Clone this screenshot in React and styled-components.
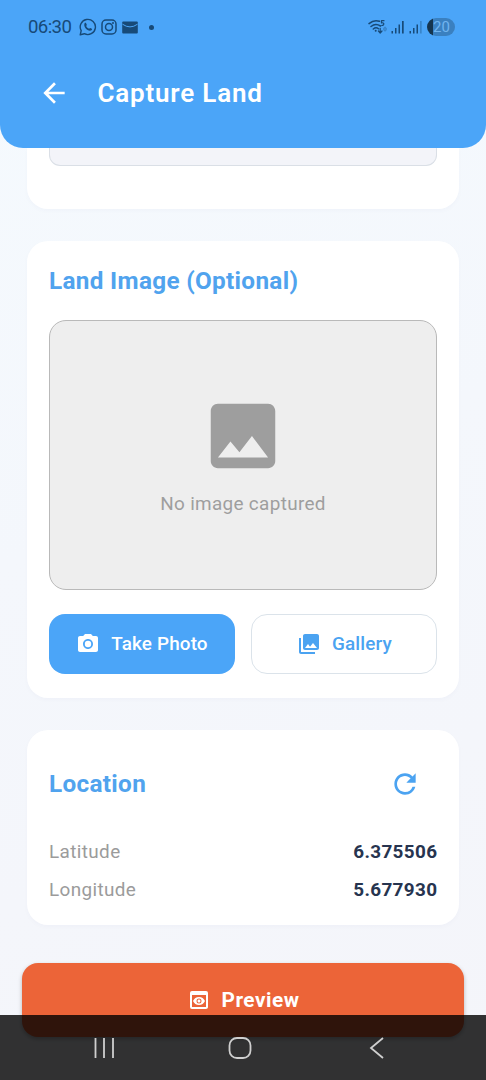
import React from "react";
import styled, { createGlobalStyle } from "styled-components";
import { MdArrowBack, MdImage, MdCameraAlt, MdPhotoLibrary, MdRefresh, MdPreview } from "react-icons/md";

const Global = createGlobalStyle`
  * { box-sizing: border-box; }
  body { margin: 0; font-family: Roboto, "Liberation Sans", sans-serif; }
  button { font-family: inherit; border: 0; padding: 0; background: none; }
`;

const Screen = styled.div`
  position: relative;
  width: 486px;
  height: 1080px;
  overflow: hidden;
  display: flex;
  flex-direction: column;
  background: linear-gradient(160deg, #f5fafe 0%, #f4f7fc 45%, #f4f5fa 100%);
`;

const Header = styled.header`
  height: 148px;
  flex: none;
  background: #4ba5f8;
  border-radius: 0 0 23px 23px;
`;

const StatusBar = styled.div`
  height: 54px;
  padding: 0 31px 0 28px;
  display: flex;
  align-items: center;
  justify-content: space-between;
  color: #174a78;
`;

const StatusGroup = styled.div`
  display: flex;
  align-items: center;
  gap: ${(p) => p.$gap}px;
  svg { display: block; }
`;

const Clock = styled.span`
  font-size: 18.6px;
  line-height: 22px;
  width: 46px;
  letter-spacing: -0.6px;
`;

const Battery = styled.div`
  width: 28px;
  height: 18px;
  border-radius: 9px;
  background: linear-gradient(90deg, #15354f 0 6px, #3a80c0 6px);
  color: #70b4f0;
  font-size: 15px;
  line-height: 18.5px;
  text-align: center;
  padding-left: 1px;
`;

const AppBar = styled.div`
  height: 78px;
  padding-left: 38px;
  display: flex;
  align-items: center;
  gap: 27.5px;
  color: #fff;
  svg { display: block; }
`;

const Title = styled.h1`
  margin: 0;
  font-size: 26px;
  line-height: 34px;
  font-weight: 600;
  letter-spacing: 0.8px;
`;

const Content = styled.main`
  flex: none;
  padding: 0 27px;
  display: flex;
  flex-direction: column;
  gap: 32px;
`;

const Card = styled.section`
  height: ${(p) => p.$height}px;
  padding: ${(p) => (p.$clipped ? "0 22px" : "22px")};
  border-radius: ${(p) => (p.$clipped ? "0 0 21px 21px" : "21px")};
  background: #fff;
  box-shadow: 0 2px 5px rgba(40, 60, 110, 0.025);
`;

const FieldEnd = styled.div`
  height: 18px;
  border: 1px solid #dadfe6;
  border-top: 0;
  border-radius: 0 0 11px 11px;
  background: #f3f4f9;
`;

const Heading = styled.h2`
  margin: 0;
  font-size: 24.3px;
  line-height: 36px;
  font-weight: 700;
  letter-spacing: 0.32px;
  color: #50a3ee;
`;

const Placeholder = styled.div`
  height: 270px;
  margin-top: 21px;
  border: 1px solid #b9b9b9;
  border-radius: 17px;
  background: #eeeeee;
  color: #9e9e9e;
  display: flex;
  flex-direction: column;
  align-items: center;
  padding-top: 72px;
  svg { display: block; }
`;

const PlaceholderText = styled.p`
  margin: 11px 0 0;
  font-size: 18.9px;
  line-height: 28px;
  letter-spacing: 0.33px;
`;

const Actions = styled.div`
  margin-top: 24px;
  display: grid;
  grid-template-columns: 1fr 1fr;
  gap: 16px;
`;

const ActionButton = styled.button`
  height: 60px;
  border-radius: 16px;
  border: ${(p) => (p.$filled ? "0" : "1.5px solid #dbe3ea")};
  background: ${(p) => (p.$filled ? "#4ba5f8" : "#fff")};
  color: ${(p) => (p.$filled ? "#fff" : "#4ba3f1")};
  display: flex;
  align-items: center;
  justify-content: center;
  gap: 11px;
  font-size: 18.9px;
  line-height: 28px;
  padding: 0 0 0 ${(p) => (p.$filled ? 0 : 1)}px;
  font-weight: 500;
  letter-spacing: 0.15px;
`;

const LocationHeader = styled.div`
  height: 64px;
  display: flex;
  align-items: center;
  justify-content: space-between;
  margin-bottom: 22px;
`;

const IconButton = styled.button`
  width: 64px;
  height: 64px;
  display: grid;
  place-items: center;
  color: #4ba3f1;
`;

const Coordinate = styled.div`
  display: flex;
  justify-content: space-between;
  height: 28px;
  line-height: 28px;
  font-size: 18.9px;
  letter-spacing: 0.38px;
  & + & { margin-top: 9.5px; }
`;

const CoordinateName = styled.span`
  color: #9b9b9b;
`;

const CoordinateValue = styled.span`
  color: #27344f;
  font-weight: 700;
  letter-spacing: 0.35px;
  margin-right: -0.35px;
`;

const PreviewButton = styled.button`
  flex: none;
  height: 74px;
  margin: 38px 22px 0;
  border-radius: 16px;
  background: #ec6438;
  box-shadow: 0 2px 4px rgba(0, 0, 0, 0.26);
  color: #fff;
  display: flex;
  align-items: center;
  justify-content: center;
  gap: 11px;
  font-size: 20.8px;
  font-weight: 700;
  letter-spacing: 0.5px;
`;

const NavBar = styled.nav`
  position: absolute;
  left: 0;
  right: 0;
  bottom: 0;
  height: 65px;
  padding: 1px 101px 0 91px;
  display: flex;
  align-items: center;
  gap: 111px;
  background: rgba(0, 0, 0, 0.8);
  svg { display: block; }
  svg:last-child { margin-left: auto; }
`;

const stroke = (width) => ({ fill: "none", stroke: "currentColor", strokeWidth: width, strokeLinecap: "round", strokeLinejoin: "round" });

const WhatsAppIcon = () => (
  <svg width="18" height="18" viewBox="0 0 18 18">
    <path d="M1.2 16.8 2.2 12.7A7.6 7.6 0 1 1 5.3 15.7Z" {...stroke(1.4)} />
    <path d="M5.6 5.2c.5-.6 1.2-.6 1.5 0l.7 1.5c.1.4-.5.9-.6 1.2.6 1.3 1.6 2.2 2.9 2.8.4-.1.8-.9 1.2-.8l1.5.8c.4.3.2 1.2-.3 1.6-3.2 2-8.7-3.6-6.9-7.1Z" fill="currentColor" />
  </svg>
);

const InstagramIcon = () => (
  <svg width="16" height="16" viewBox="0 0 16 16">
    <rect x="1" y="1" width="14" height="14" rx="4" {...stroke(1.5)} />
    <circle cx="8" cy="8" r="3.5" {...stroke(1.5)} />
    <circle cx="12" cy="4" r="1" fill="currentColor" />
  </svg>
);

const MailIcon = () => (
  <svg width="16" height="13" viewBox="0 0 16 13">
    <rect x="0.2" y="0.5" width="15.6" height="12" rx="1" fill="currentColor" />
    <path d="M0.5 3.2Q8 8.6 15.5 3.2" fill="none" stroke="#4ba5f8" strokeWidth="1" />
  </svg>
);

const WifiIcon = () => (
  <svg width="19" height="16" viewBox="0 0 19 16">
    <path d="M1 4.6Q6 .3 11.5 2.3M3 7.5Q7.5 3.7 12.5 7M5.3 10Q8 7.7 10.5 9.8" {...stroke(1.5)} />
    <circle cx="7.7" cy="11.7" r="1" fill="currentColor" />
    <path d="M16 1.7h-2.5v2.2c2.8-.8 3.3 2.6.2 2.6M12.2 9.3v4.5M10.4 12l1.8 2 1.8-2" {...stroke(1.2)} />
    <path d="M17 8v4M15.6 9.6 17 8l1.4 1.6M15.6 10.6 17 12l1.4-1.4" opacity=".35" {...stroke(1.1)} />
  </svg>
);

const SignalIcon = ({ weak }) => (
  <svg width="14" height="14" viewBox="0 0 14 14" fill="currentColor">
    <rect x="0.5" y="11" width="1.5" height="2.5" />
    <rect x="4" y="8" width="1.5" height="5.5" />
    <rect x="7.5" y="4.5" width="1.5" height="9" />
    <rect x="11" y="1" width="1.7" height="12.5" opacity={weak ? 0.35 : 1} />
  </svg>
);

const RecentsIcon = () => (
  <svg width="26" height="22" viewBox="0 0 26 22">
    <path d="M4.5 1v20M13 1v20M22 1v20" stroke="#cfcfcf" strokeWidth="1.8" />
  </svg>
);

const HomeIcon = () => (
  <svg width="24" height="22" viewBox="0 0 24 22">
    <rect x="1.5" y="1" width="21" height="20" rx="7.5" fill="none" stroke="#cfcfcf" strokeWidth="1.8" />
  </svg>
);

const BackIcon = () => (
  <svg width="16" height="22" viewBox="0 0 16 22">
    <path d="M14 1 2 11l12 10" fill="none" stroke="#cfcfcf" strokeWidth="1.8" />
  </svg>
);

const Dot = styled.span`
  width: 5px;
  height: 5px;
  margin-left: 7px;
  border-radius: 50%;
  background: currentColor;
`;

export default function App() {
  return (
    <Screen>
      <Global />
      <Header>
        <StatusBar>
          <StatusGroup $gap={4.5}>
            <Clock>06:30</Clock>
            <WhatsAppIcon />
            <InstagramIcon />
            <MailIcon />
            <Dot />
          </StatusGroup>
          <StatusGroup $gap={4}>
            <WifiIcon />
            <SignalIcon />
            <SignalIcon weak />
            <Battery>20</Battery>
          </StatusGroup>
        </StatusBar>
        <AppBar>
          <MdArrowBack size={32} />
          <Title>Capture Land</Title>
        </AppBar>
      </Header>
      <Content>
        <Card $height={61} $clipped>
          <FieldEnd />
        </Card>
        <Card $height={457}>
          <Heading>Land Image (Optional)</Heading>
          <Placeholder>
            <MdImage size={86} />
            <PlaceholderText>No image captured</PlaceholderText>
          </Placeholder>
          <Actions>
            <ActionButton $filled>
              <MdCameraAlt size={24} />
              Take Photo
            </ActionButton>
            <ActionButton>
              <MdPhotoLibrary size={24} />
              Gallery
            </ActionButton>
          </Actions>
        </Card>
        <Card $height={195}>
          <LocationHeader>
            <Heading>Location</Heading>
            <IconButton aria-label="Refresh location">
              <MdRefresh size={32} />
            </IconButton>
          </LocationHeader>
          <Coordinate>
            <CoordinateName>Latitude</CoordinateName>
            <CoordinateValue>6.375506</CoordinateValue>
          </Coordinate>
          <Coordinate>
            <CoordinateName>Longitude</CoordinateName>
            <CoordinateValue>5.677930</CoordinateValue>
          </Coordinate>
        </Card>
      </Content>
      <PreviewButton>
        <MdPreview size={24} />
        Preview
      </PreviewButton>
      <NavBar>
        <RecentsIcon />
        <HomeIcon />
        <BackIcon />
      </NavBar>
    </Screen>
  );
}
